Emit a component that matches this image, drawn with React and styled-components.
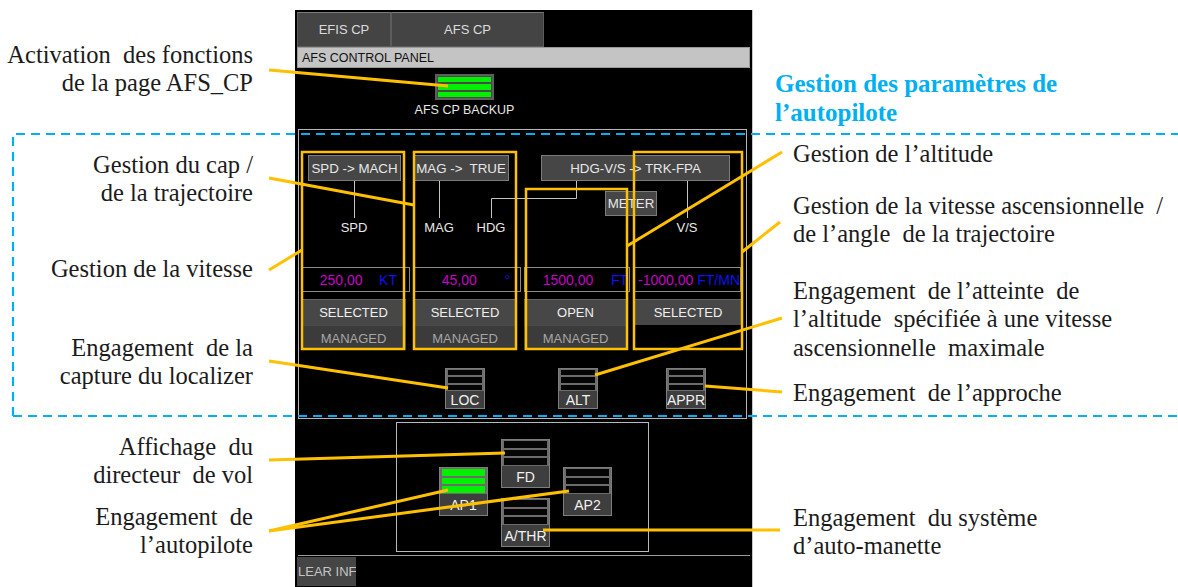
import React from 'react'
import styled, { createGlobalStyle } from 'styled-components';

const GlobalStyle = createGlobalStyle`
body{
margin:0;
background:#fff;
}
`;

const Page = styled.div`
position:relative;
display:flex;
width:1178px;
height:587px;
overflow:hidden;
background:#fff;
`;

const LeftNotes = styled.div`
width:295px;
flex-shrink:0;
box-sizing:border-box;
padding-right:42px;
display:flex;
flex-direction:column;
align-items:flex-end;
`;

const RightNotes = styled.div`
flex:1;
display:flex;
flex-direction:column;
padding-left:22px;
`;

const Note = styled.div`
font-family:"Liberation Serif","Times New Roman",serif;
font-size:24.5px;
line-height:28.5px;
color:#1b1b1b;
white-space:pre;
text-align:${({$align})=>$align || 'left'};
margin-top:${({$mt})=>$mt}px;
margin-left:${({$ml})=>$ml || 0}px;
`;

const Heading = styled(Note)`
color:#00b0f0;
font-weight:700;
font-size:25px;
line-height:29px;
`;

const Panel = styled.div`
width:458px;
height:577px;
margin-top:10px;
flex-shrink:0;
background:#000;
border-right:1px solid #c8c8c8;
display:flex;
flex-direction:column;
box-sizing:border-box;
font-family:"Liberation Sans",Arial,sans-serif;
font-size:12.5px;
overflow:hidden;
`;

const TabRow = styled.div`
display:flex;
height:35px;
margin:2px 0 0 2px;
`;

const Tab = styled.div`
width:${({$w})=>$w}px;
box-sizing:border-box;
background:#444;
border:1px solid #5c5c5c;
border-top-color:#7a7a7a;
color:#dcdcdc;
font-size:13px;
display:flex;
align-items:center;
justify-content:center;
`;

const TitleBar = styled.div`
height:21px;
margin:0 2px;
box-sizing:border-box;
background:#c4c4c4;
border:1px solid #9a9a9a;
color:#111;
padding-left:4px;
display:flex;
align-items:center;
`;

const BackupBlock = styled.div`
width:139px;
margin:6px 0 0 100px;
display:flex;
flex-direction:column;
align-items:center;
`;

const BackupButton = styled.div`
width:59px;
height:26px;
box-sizing:border-box;
border:2px solid #5e5e5e;
background:#4a4a4a;
padding:1px;
display:flex;
flex-direction:column;
gap:2px;
`;

const Bar = styled.div`
flex:1;
background:${({$on})=>$on ? '#00f000' : '#050505'};
`;

const CaptionText = styled.div`
margin-top:3px;
line-height:14px;
color:#e8e8e8;
`;

const MainBox = styled.div`
width:449px;
height:290px;
margin:12px 0 0 3px;
box-sizing:border-box;
border:1px solid #b5b5b5;
padding-top:25px;
display:flex;
flex-direction:column;
`;

const ButtonRow = styled.div`
display:flex;
height:26px;
`;

const ModeBtn = styled.div`
width:${({$w})=>$w}px;
height:${({$h})=>$h || 26}px;
margin-left:${({$ml})=>$ml || 0}px;
box-sizing:border-box;
background:#464646;
border:1px solid #7c7c7c;
color:#e8e8e8;
font-size:13.3px;
display:flex;
align-items:center;
justify-content:center;
white-space:nowrap;
overflow:hidden;
`;

const ModeArea = styled.div`
position:relative;
height:86px;
display:flex;
flex-direction:column;
`;

const Connectors = styled.svg`
position:absolute;
top:0;
left:0;
`;

const MeterRow = styled.div`
display:flex;
margin-top:10px;
position:relative;
`;

const LabelRow = styled.div`
display:flex;
margin-top:5px;
`;

const ModeLabel = styled.div`
width:${({$w})=>$w}px;
margin-left:${({$ml})=>$ml || 0}px;
text-align:center;
line-height:14px;
font-size:13px;
color:#e8e8e8;
`;

const FieldRow = styled.div`
display:grid;
grid-template-columns:108px 108px 106px 108px;
column-gap:3px;
padding-left:3px;
height:25px;
font-size:14px;
`;

const Field = styled.div`
box-sizing:border-box;
border:1px solid #8a8a8a;
display:flex;
align-items:center;
padding-right:${({$pr})=>$pr}px;
white-space:nowrap;
overflow:hidden;
`;

const Value = styled.span`
flex:1;
text-align:center;
color:#c800c8;
`;

const Unit = styled.span`
color:#1010f0;
`;

const StateGrid = styled.div`
display:grid;
grid-template-columns:105px 104px 103px 108px;
column-gap:7px;
padding-left:2px;
margin-top:7px;
font-size:13px;
`;

const StateColumn = styled.div`
display:flex;
flex-direction:column;
`;

const StateBtn = styled.div`
height:${({$h})=>$h}px;
box-sizing:border-box;
background:${({$dim})=>$dim ? '#3b3b3b' : '#474747'};
border-top:1px solid ${({$dim})=>$dim ? '#4a4a4a' : '#626262'};
color:${({$dim})=>$dim ? '#a6a6a6' : '#efefef'};
display:flex;
align-items:center;
justify-content:center;
`;

const PushRow = styled.div`
display:flex;
margin-top:18px;
`;

const PushBtn = styled.div`
width:${({$w})=>$w}px;
height:${({$h})=>$h}px;
margin-left:${({$ml})=>$ml || 0}px;
box-sizing:border-box;
border:1px solid #7e7e7e;
background:#3e3e3e;
display:flex;
flex-direction:column;
`;

const PushBars = styled.div`
height:${({$h})=>$h}px;
background:#6c6c6c;
padding:1px 2px;
box-sizing:border-box;
display:flex;
flex-direction:column;
gap:2px;
`;

const PushLabel = styled.div`
flex:1;
display:flex;
align-items:center;
justify-content:center;
color:#f2f2f2;
font-size:14px;
white-space:nowrap;
`;

const APBox = styled.div`
width:253px;
height:130px;
margin:3px 0 0 101px;
box-sizing:border-box;
border:1px solid #b8b8b8;
`;

const APGrid = styled.div`
display:grid;
grid-template-columns:49px 49px 49px;
grid-template-rows:28px 21px 10px 18px 31px;
column-gap:13px;
margin:16px 0 0 42px;
`;

const Cell = styled.div`
grid-column:${({$col})=>$col};
grid-row:${({$row})=>$row} / span ${({$span})=>$span};
display:flex;
`;

const Divider = styled.div`
height:1px;
width:452px;
margin:3px 0 0 3px;
background:#9c9c9c;
`;

const ClearBtn = styled.div`
width:59px;
height:29px;
margin:1px 0 0 2px;
background:#454545;
color:#c4c4c4;
font-size:13px;
display:flex;
align-items:center;
white-space:nowrap;
overflow:hidden;
padding-left:1px;
box-sizing:border-box;
`;

const Overlay = styled.svg`
position:absolute;
top:0;
left:0;
pointer-events:none;
`;

const Push = ({label, w, h, ml, barsH, on}) => (
  <PushBtn $w={w} $h={h} $ml={ml}>
    <PushBars $h={barsH}>
      <Bar $on={on}/>
      <Bar $on={on}/>
      <Bar $on={on}/>
    </PushBars>
    <PushLabel>{label}</PushLabel>
  </PushBtn>
);

const leaders = [
  [269,70,448,86],
  [269,178,414,205],
  [269,270,302,250],
  [269,361,448,388],
  [269,460,505,453],
  [269,531,448,490],
  [269,531,569,491],
  [782,152,627,246],
  [780,222,742,252],
  [782,318,595,375],
  [782,392,705,386],
  [780,530,543,530],
];

const frames = [
  [302,152,102,197],
  [414,152,102,197],
  [526,189,101,160],
  [634,152,108,197],
];

const fields = [
  {v:'250,00', u:'KT', pr:12},
  {v:'45,00', u:'°', pr:10},
  {v:'1500,00', u:'FT', pr:1},
  {v:'-1000,00', u:'FT/MN', pr:0},
];

export default function App(){
  return (
    <>
    <GlobalStyle/>
    <Page>
      <LeftNotes>
        <Note $align="right" $mt={40.75}>{'Activation  des fonctions\nde la page AFS_CP'}</Note>
        <Note $align="right" $mt={53}>{'Gestion du cap /\nde la trajectoire'}</Note>
        <Note $align="right" $mt={47}>Gestion de la vitesse</Note>
        <Note $align="right" $mt={50.5}>{'Engagement  de la\ncapture du localizer'}</Note>
        <Note $align="right" $mt={42}>{'Affichage  du\ndirecteur  de vol'}</Note>
        <Note $align="right" $mt={13}>{'Engagement  de\nl’autopilote'}</Note>
      </LeftNotes>

      <Panel>
        <TabRow>
          <Tab $w={94}>EFIS CP</Tab>
          <Tab $w={153}>AFS CP</Tab>
        </TabRow>
        <TitleBar>AFS CONTROL PANEL</TitleBar>
        <BackupBlock>
          <BackupButton>
            <Bar $on/>
            <Bar $on/>
            <Bar $on/>
          </BackupButton>
          <CaptionText>AFS CP BACKUP</CaptionText>
        </BackupBlock>

        <MainBox>
          <ButtonRow>
            <ModeBtn $w={93} $ml={9}>SPD -&gt; MACH</ModeBtn>
            <ModeBtn $w={96} $ml={12}>MAG -&gt;&nbsp; TRUE</ModeBtn>
            <ModeBtn $w={189} $ml={32}>HDG-V/S -&gt; TRK-FPA</ModeBtn>
          </ButtonRow>

          <ModeArea>
            <Connectors width="447" height="86" viewBox="0 0 447 86">
              <g stroke="#c4c4c4" strokeWidth="1" fill="none">
                <path d="M55.5 0V37"/>
                <path d="M140.5 0V37"/>
                <path d="M277.5 0V17.5H192.5V37"/>
                <path d="M388.5 0V37"/>
              </g>
            </Connectors>
            <MeterRow>
              <ModeBtn $w={52} $h={25} $ml={306}>METER</ModeBtn>
            </MeterRow>
            <LabelRow>
              <ModeLabel $w={110}>SPD</ModeLabel>
              <ModeLabel $w={60}>MAG</ModeLabel>
              <ModeLabel $w={44}>HDG</ModeLabel>
              <ModeLabel $w={60} $ml={144}>V/S</ModeLabel>
            </LabelRow>
          </ModeArea>

          <FieldRow>
            {fields.map(f => (
              <Field key={f.v} $pr={f.pr}>
                <Value>{f.v}</Value>
                <Unit>{f.u}</Unit>
              </Field>
            ))}
          </FieldRow>

          <StateGrid>
            <StateColumn>
              <StateBtn $h={26}>SELECTED</StateBtn>
              <StateBtn $h={25} $dim>MANAGED</StateBtn>
            </StateColumn>
            <StateColumn>
              <StateBtn $h={26}>SELECTED</StateBtn>
              <StateBtn $h={25} $dim>MANAGED</StateBtn>
            </StateColumn>
            <StateColumn>
              <StateBtn $h={26}>OPEN</StateBtn>
              <StateBtn $h={25} $dim>MANAGED</StateBtn>
            </StateColumn>
            <StateColumn>
              <StateBtn $h={26}>SELECTED</StateBtn>
            </StateColumn>
          </StateGrid>

          <PushRow>
            <Push label="LOC" w={40} h={41} ml={146} barsH={22}/>
            <Push label="ALT" w={40} h={41} ml={73} barsH={22}/>
            <Push label="APPR" w={40} h={41} ml={68} barsH={22}/>
          </PushRow>
        </MainBox>

        <APBox>
          <APGrid>
            <Cell $col={2} $row={1} $span={2}><Push label="FD" w={49} h={49} barsH={26}/></Cell>
            <Cell $col={1} $row={2} $span={3}><Push label="AP1" w={49} h={49} barsH={26} on/></Cell>
            <Cell $col={3} $row={2} $span={3}><Push label="AP2" w={49} h={49} barsH={26}/></Cell>
            <Cell $col={2} $row={4} $span={2}><Push label="A/THR" w={49} h={49} barsH={26}/></Cell>
          </APGrid>
        </APBox>

        <Divider/>
        <ClearBtn>LEAR INF</ClearBtn>
      </Panel>

      <RightNotes>
        <Heading $mt={68.5}>{'Gestion des paramètres de\nl’autopilote'}</Heading>
        <Note $mt={13} $ml={18}>Gestion de l’altitude</Note>
        <Note $mt={23.5} $ml={18}>{'Gestion de la vitesse ascensionnelle  /\nde l’angle  de la trajectoire'}</Note>
        <Note $mt={28} $ml={18}>{'Engagement  de l’atteinte  de\nl’altitude  spécifiée à une vitesse\nascensionnelle  maximale'}</Note>
        <Note $mt={16.5} $ml={18}>Engagement  de l’approche</Note>
        <Note $mt={96.5} $ml={18}>{'Engagement  du système\nd’auto-manette'}</Note>
      </RightNotes>

      <Overlay width="1178" height="587" viewBox="0 0 1178 587">
        <g fill="none" stroke="#ffc000" strokeWidth="2.5">
          {frames.map(([x,y,w,h]) => <rect key={x} x={x} y={y} width={w} height={h}/>)}
        </g>
        <g stroke="#ffc000" strokeWidth="3">
          {leaders.map(([x1,y1,x2,y2],i) => <line key={i} x1={x1} y1={y1} x2={x2} y2={y2}/>)}
        </g>
        <path d="M13 416V134H1178M13 416H1178" fill="none" stroke="#00b0f0" strokeWidth="2.2" strokeDasharray="9 6"/>
      </Overlay>
    </Page>
    </>
  )
}
